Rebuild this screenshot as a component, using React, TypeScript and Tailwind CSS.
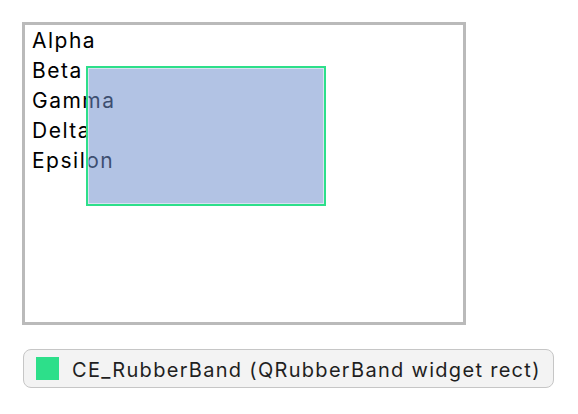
import React from "react";

const items = ["Alpha", "Beta", "Gamma", "Delta", "Epsilon"];

export default function App() {
  return (
    <div
      className="min-h-screen bg-white pl-[22px] pt-[22px]"
      style={{ fontFamily: "Inter, 'Liberation Sans', sans-serif" }}
    >
      <div className="relative w-[444px] h-[303px] border-[3px] border-[#bababa] bg-white">
        <ul className="pl-[7px] pt-px text-[21px] tracking-[1.5px] leading-[30px] text-black">
          {items.map((item) => (
            <li key={item}>{item}</li>
          ))}
        </ul>

        {/* rubber band selection */}
        <div className="absolute left-[61px] top-[41px] w-[240px] h-[140px] border-2 border-[#2ddf8a]">
          <div className="w-full h-full border border-white/50 bg-[rgba(112,144,206,0.54)]" />
        </div>
      </div>

      <div className="mt-[24px] ml-px w-[531px] h-[39px] flex items-center gap-[13px] pl-[12px] rounded-[8px] border border-[#c6c6c6] bg-[#f3f3f3]">
        <span className="w-[23px] h-[23px] bg-[#2ddf8a]" />
        <span className="text-[20px] tracking-[1.3px] text-[#1f1f1f] pt-[3px]">
          CE_RubberBand (QRubberBand widget rect)
        </span>
      </div>
    </div>
  );
}
